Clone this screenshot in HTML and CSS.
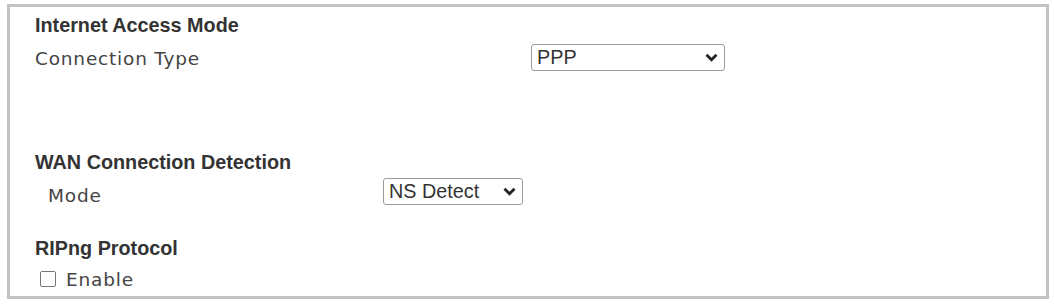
FILE: index.html
```html
<!DOCTYPE html>
<html>
<head>
<meta charset="utf-8">
<link rel="stylesheet" href="styles.css">
</head>
<body>
<div class="panel">
  <section class="sec sec-internet">
    <div class="title">Internet Access Mode</div>
    <div class="row row-conn">
      <span class="label">Connection Type</span>
      <div class="select sel-ppp"><span class="val">PPP</span>
        <svg class="chev" width="13" height="9" viewBox="0 0 13 9"><path d="M1.5 1.8 L6.5 6.8 L11.5 1.8" fill="none" stroke="#222" stroke-width="2.8"/></svg>
      </div>
    </div>
  </section>
  <section class="sec sec-wan">
    <div class="title">WAN Connection Detection</div>
    <div class="row row-mode">
      <span class="label label-indent">Mode</span>
      <div class="select sel-ns"><span class="val">NS Detect</span>
        <svg class="chev" width="13" height="9" viewBox="0 0 13 9"><path d="M1.5 1.8 L6.5 6.8 L11.5 1.8" fill="none" stroke="#222" stroke-width="2.8"/></svg>
      </div>
    </div>
  </section>
  <section class="sec sec-rip">
    <div class="title">RIPng Protocol</div>
    <label class="row row-check"><span class="check"></span><span class="label">Enable</span></label>
  </section>
</div>
</body>
</html>
```

FILE: styles.css
```css
html, body { margin: 0; padding: 0; background: #fff; }
body { width: 1054px; height: 304px; overflow: hidden; }

.panel {
  box-sizing: border-box;
  margin: 4px 5px 0 7px;
  width: 1042px;
  height: 295px;
  border: 3px solid #c2c2c2;
  padding: 6px 0 0 25px;
}

.title {
  font-family: "Liberation Sans", Arial, sans-serif;
  font-weight: bold;
  font-size: 19.8px;
  line-height: 24px;
  height: 24px;
  color: #333;
}

.label {
  font-family: "DejaVu Sans", Verdana, sans-serif;
  font-size: 18.5px;
  letter-spacing: 0.8px;
  color: #444;
}
.label-indent { margin-left: 13px; }

.row { display: flex; align-items: center; }
.row-conn { height: 30px; margin-top: 6px; }
.row-conn .label { width: 496px; }
.row-mode { height: 30px; margin-top: 6px; }
.row-mode .label { width: 335px; }

.sec-wan { margin-top: 77px; }
.sec-rip { margin-top: 26px; }

.select {
  box-sizing: border-box;
  display: flex;
  align-items: center;
  justify-content: space-between;
  border: 1.5px solid #9a9a9a;
  border-radius: 3px;
  background: #fff;
  padding: 0 6px 0 5px;
  font-family: "Liberation Sans", Arial, sans-serif;
  font-size: 19.8px;
  color: #333;
}
.sel-ppp { width: 194px; height: 27px; margin-top: -2px; }
.sel-ns { width: 140px; height: 27px; margin-top: -7px; }
.chev { display: block; }

.row-check { height: 28px; margin-top: 5px; }
.check {
  box-sizing: border-box;
  width: 16px; height: 16px;
  margin: 0 10px 0 5px;
  border: 1.5px solid #777;
  border-radius: 2px;
  background: #fff;
}
```
